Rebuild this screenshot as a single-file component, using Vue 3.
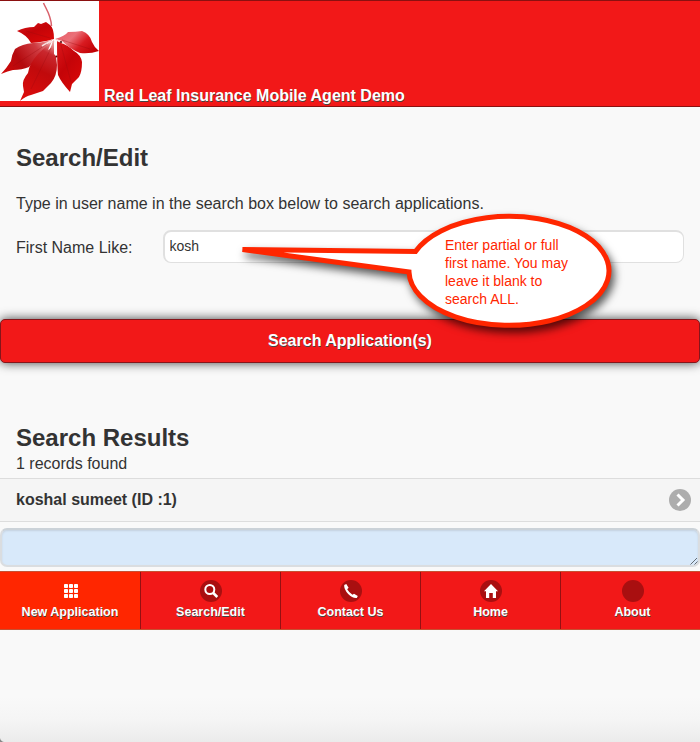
<script setup>
import { ref } from 'vue'

const firstName = ref('kosh')
const tabs = [
  { label: 'New Application', icon: 'grid' },
  { label: 'Search/Edit', icon: 'search' },
  { label: 'Contact Us', icon: 'phone' },
  { label: 'Home', icon: 'home' },
  { label: 'About', icon: '' },
]
</script>

<template>
  <div class="page">
    <header class="header">
      <svg class="logo" width="99" height="100" viewBox="0 1 99 100">
        <defs>
          <linearGradient id="leafA" gradientUnits="userSpaceOnUse" x1="5" y1="75" x2="53" y2="40">
            <stop offset="0" stop-color="#d00808" />
            <stop offset="0.35" stop-color="#b40a0e" />
            <stop offset="0.7" stop-color="#cf3a40" />
            <stop offset="1" stop-color="#efb0b0" />
          </linearGradient>
          <linearGradient id="leafD" gradientUnits="userSpaceOnUse" x1="25" y1="98" x2="54" y2="42">
            <stop offset="0" stop-color="#dc0c0c" />
            <stop offset="0.5" stop-color="#c00a0c" />
            <stop offset="0.8" stop-color="#c9282e" />
            <stop offset="1" stop-color="#f0b4b4" />
          </linearGradient>
          <linearGradient id="leafB" x1="0" y1="0.2" x2="1" y2="0.7">
            <stop offset="0" stop-color="#e8606a" />
            <stop offset="0.35" stop-color="#ea7078" />
            <stop offset="0.65" stop-color="#d81a20" />
            <stop offset="1" stop-color="#c00004" />
          </linearGradient>
          <linearGradient id="leafC" x1="0" y1="0" x2="0.7" y2="1">
            <stop offset="0" stop-color="#dc181c" />
            <stop offset="0.5" stop-color="#c40408" />
            <stop offset="1" stop-color="#d80808" />
          </linearGradient>
        </defs>
        <rect y="1" width="99" height="100" fill="#fff" />
        <path d="M43.500 3 C46 9 51 15 51.500 26" fill="none" stroke="#d9606a" stroke-width="1.500" />
        <path d="M54 39 Q44 42 31 43 Q27 35 17 31 Q25 27 34 27 L38 23 L41 24 L46 22 L50 25 Q54 28 54 39 Z" fill="url(#leafC)" />
        <path d="M53 39 Q43 43 33 43 Q22 44 15 49 Q12 54 11 61 Q6 69 1 74 Q8 71 13 70 Q22 70 29 67 Q39 58 53 39 Z" fill="url(#leafA)" />
        <path d="M54 40 Q45 47 38 54 Q29 64 28 73 Q22 80 23 86 L24 92 L20 101 Q26 96 31 95 L43 91 L51 83 Q57 76 57 65 Z" fill="url(#leafD)" />
        <path d="M57 41 Q68 45 74 51 Q81 55 82 62 Q82 72 79 77 L72 84 L70 92 Q61 82 58 75 Q57 64 57 41 Z" fill="url(#leafC)" />
        <path d="M55 39 Q65 36 68 32 Q76 32 82 31 Q90 34 92 42 Q94 47 99 51 Q90 54 80 53 Q70 49 62 41 Z" fill="url(#leafB)" />
        <path d="M52 41 L48 50 Q51 49 52.500 42 M54 42 L54 54 L57 57 L57 43 Z" fill="#fff" />
        <path d="M57 40 L63 43 M51 41 L42 46" stroke="#fbe4e4" stroke-width="1.600" fill="none" />
        <path d="M51 48 L31 89 M47 44 L13 66 M61 45 L71 82 M62 40 L90 49 M50 38 L26 31" stroke="#98080e" stroke-width=".7" fill="none" opacity=".45" />
        <circle cx="61" cy="42" r="1" fill="#550000" /><circle cx="56.500" cy="56.500" r=".9" fill="#600000" />
      </svg>
      <h1>Red Leaf Insurance Mobile Agent Demo</h1>
    </header>

    <main>
      <section class="intro">
        <h2>Search/Edit</h2>
        <p>Type in user name in the search box below to search applications.</p>
        <div class="field">
          <label for="first">First Name Like:</label>
          <input id="first" v-model="firstName" type="text" />
        </div>
      </section>
      <button class="submit">Search Application(s)</button>
      <section class="results">
        <h2>Search Results</h2>
        <p>1 records found</p>
      </section>
      <a class="result">
        <span>koshal sumeet (ID :1)</span>
        <svg width="22" height="22" viewBox="0 0 22 22">
          <circle cx="11" cy="11" r="11" fill="#adadad" />
          <path d="M8.500 5.500 L14 11 L8.500 16.500" fill="none" stroke="#fff" stroke-width="3" />
        </svg>
      </a>
      <div class="log">
        <svg width="8" height="8" viewBox="0 0 8 8"><path d="M.5 7.500 L7 1 M4.500 7.500 L7.500 4.500" stroke="#666e76" fill="none" /></svg>
      </div>
    </main>

    <nav class="tabs">
      <a v-for="(tab, i) in tabs" :key="tab.label" class="tab" :class="{ active: i === 0 }">
        <svg width="22" height="22" viewBox="0 0 22 22">
          <circle v-if="tab.icon !== 'grid'" cx="11" cy="11" r="11" fill="#a90f10" />
          <g v-if="tab.icon === 'grid'" fill="#fff">
            <template v-for="r in 3" :key="r">
              <rect v-for="c in 3" :key="c" :x="-1 + c * 5" :y="-1 + r * 5" width="4" height="4" rx=".8" />
            </template>
          </g>
          <g v-else-if="tab.icon === 'search'" fill="none" stroke="#fff">
            <circle cx="9.800" cy="9.500" r="4.500" stroke-width="2" />
            <path d="M13 12.800 L17.300 17" stroke-width="2.600" />
          </g>
          <path v-else-if="tab.icon === 'phone'" fill="#fff" d="M4.200 5 L6.300 4 L8.600 7.800 L7.200 9.200 Q9.200 12.800 12.500 14.800 L14 13.700 L17.800 16.100 L16.800 18 Q12.500 18.500 8.200 14 Q3.700 9 4.200 5Z" />
          <path v-else-if="tab.icon === 'home'" fill="#fff" d="M11 4 L18 11.300 H16 V18 H12.800 V13 H9.200 V18 H6 V11.300 H4 Z" />
        </svg>
        <span>{{ tab.label }}</span>
      </a>
    </nav>
    <div class="shade"></div>
    <svg class="corner" width="4" height="4"><path d="M0 0 Q.5 3 4 4 H0Z" fill="#888" /></svg>

    <div class="callout">
      <svg width="390" height="140" viewBox="235 205 390 140">
        <path d="M415.500 252.500 A100 54.500 0 1 1 409 273 L242.500 250.500 Z" fill="#fff" stroke="#ff2600" stroke-width="5" />
      </svg>
      <p>Enter partial or full<br />first name. You may<br />leave it blank to<br />search ALL.</p>
    </div>
  </div>
</template>

<style>
body { margin: 0; background: #f9f9f9; }
</style>

<style scoped>
.page {
  position: relative;
  display: flex;
  flex-direction: column;
  height: 742px;
  overflow: hidden;
  background: #f9f9f9;
  color: #333;
  font: 16px/20px "Liberation Sans", Arial, sans-serif;
}
h1, h2, p { margin: 0; }
svg { display: block; flex: none; }
.header {
  display: flex;
  box-sizing: border-box;
  height: 107px;
  gap: 5px;
  align-items: flex-end;
  padding-bottom: 5px;
  background: #f21818;
  border: solid #8b1010;
  border-width: 1px 0;
}
h1 {
  color: #fff;
  font-size: 16px;
  line-height: 20px;
  margin-bottom: -5px;
  text-shadow: 0 1px 0 #444;
}
h2 { font-size: 24px; line-height: 30px; }
.intro { padding: 36px 16px 0; }
.intro p { margin-top: 21px; }
.field { display: flex; align-items: center; margin-top: 16px; }
.field label { width: 147px; padding-top: 2px; }
.field input {
  box-sizing: border-box;
  width: 521px;
  height: 33px;
  padding: 0 5px 2px 4.5px;
  border: 2px solid #e0e0e0;
  border-right-width: 1px;
  border-bottom-width: 1px;
  border-radius: 8px;
  background: #fff;
  color: #333;
  font: 14px "Liberation Sans", Arial, sans-serif;
  outline: none;
}
.submit {
  display: block;
  box-sizing: border-box;
  width: 100%;
  height: 44px;
  margin: 56px 0 0;
  padding: 0 0 1px;
  border: 1px solid #85151a;
  border-radius: 5px;
  background: #f21818;
  box-shadow: 0 0 11px rgba(0, 0, 0, .75);
  color: #fff;
  font: bold 16px/20px "Liberation Sans", Arial, sans-serif;
  text-shadow: 0 1px 0 #444;
}
.results { padding: 60px 16px 0; }
.results p { margin-top: 1px; }
.result {
  display: flex;
  align-items: center;
  justify-content: space-between;
  box-sizing: border-box;
  height: 44px;
  margin-top: 4px;
  padding: 0 9px 0 16px;
  border: solid #ddd;
  border-width: 1px 0;
  background: #f5f5f5;
  font-weight: bold;
}
.result span { margin-top: -1px; }
.log {
  display: flex;
  align-items: flex-end;
  justify-content: flex-end;
  box-sizing: border-box;
  height: 39px;
  margin-top: 6px;
  border: 2px solid #dadde0;
  border-top-color: #cbd2d8;
  border-radius: 7px;
  background: #d8e9fa;
  box-shadow: inset 0 1px 2px #c4d1df;
}
.tabs {
  display: grid;
  grid-template-columns: 141px repeat(3, 140px) 1fr;
  box-sizing: border-box;
  height: 59px;
  margin-top: 4px;
  border: solid #c65032;
  border-width: 1px 0;
  background: #f21818;
}
.tab {
  display: flex;
  flex-direction: column;
  align-items: center;
  box-sizing: border-box;
  padding-top: 8px;
  border-right: 1px solid #951012;
  color: #fff;
  font-size: 12.5px;
  font-weight: bold;
  line-height: 16px;
  text-shadow: 0 1px 0 #444;
}
.tab svg { margin-left: 1px; }
.tab:last-child { padding-left: 4px; border-right: 0; }
.tab span { margin-top: 2px; }
.tab.active { background: #ff2600; }
.shade { height: 45px; margin-top: auto; background: linear-gradient(#f9f9f9, #f5f5f5 50%, #ebebeb); }
.corner { position: absolute; bottom: 0; left: 0; }
.callout { position: absolute; top: 204px; left: 235px; }
.callout svg { filter: drop-shadow(3px 5px 4px rgba(0, 0, 0, .65)); }
.callout p {
  position: absolute;
  top: 32px;
  left: 210px;
  color: #ff2600;
  font-size: 14px;
  line-height: 18px;
  white-space: nowrap;
}
</style>
